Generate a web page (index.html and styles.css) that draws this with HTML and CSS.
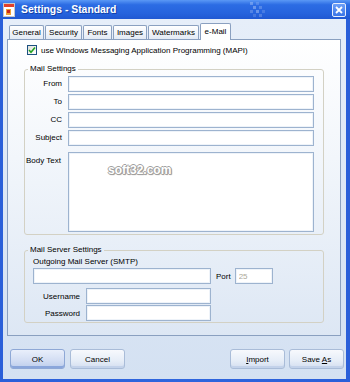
FILE: index.html
```html
<!DOCTYPE html>
<html lang="en">
<head>
  <meta charset="UTF-8">
  <title>Settings - Standard</title>
  <link rel="stylesheet" href="styles.css">
</head>
<body>

  <div class="window">

    <!-- Title bar -->
    <div class="titlebar">
      <svg class="app-icon" width="12" height="14" viewBox="0 0 12 14">
        <rect x="0.5" y="0.5" width="11" height="13" fill="#fff" stroke="#c9c9c9"/>
        <rect x="1" y="1" width="10" height="3" fill="#e2402a"/>
        <rect x="3" y="6" width="5" height="6" fill="#f0a035"/>
        <rect x="4" y="7" width="3" height="3" fill="#c8281c"/>
      </svg>
      <span class="title">Settings - Standard</span>
      <svg class="title-pattern" width="20" height="19" viewBox="0 0 20 19">
        <rect x="2" y="2" width="3" height="3" fill="#fff" opacity="0.25"/>
        <rect x="8" y="2" width="3" height="3" fill="#fff" opacity="0.15"/>
        <rect x="5" y="6" width="3" height="3" fill="#fff" opacity="0.3"/>
        <rect x="11" y="6" width="3" height="3" fill="#fff" opacity="0.2"/>
        <rect x="2" y="10" width="3" height="3" fill="#fff" opacity="0.2"/>
        <rect x="8" y="10" width="3" height="3" fill="#fff" opacity="0.3"/>
        <rect x="14" y="10" width="3" height="3" fill="#fff" opacity="0.15"/>
        <rect x="5" y="14" width="3" height="3" fill="#fff" opacity="0.15"/>
        <rect x="11" y="14" width="3" height="3" fill="#fff" opacity="0.2"/>
      </svg>
      <span class="close">
        <svg width="8" height="8" viewBox="0 0 8 8">
          <path d="M1 1 L7 7 M7 1 L1 7" stroke="#fff" stroke-width="1.8"/>
        </svg>
      </span>
    </div>

    <div class="client">

      <!-- Tabs -->
      <div class="tabs">
        <span class="tab tab-general">General</span>
        <span class="tab tab-security">Security</span>
        <span class="tab tab-fonts">Fonts</span>
        <span class="tab tab-images">Images</span>
        <span class="tab tab-watermarks">Watermarks</span>
        <span class="tab tab-email active">e-Mail</span>
      </div>

      <div class="panel">
        <label class="check-row">
          <span class="checkbox">
            <svg width="8" height="8" viewBox="0 0 8 8">
              <path d="M1 4 L3 6.2 L7 1.5" fill="none" stroke="#21a121" stroke-width="1.6"/>
            </svg>
          </span>
          use Windows Messaging Application Programming (MAPI)
        </label>

        <!-- Mail Settings -->
        <fieldset class="group">
          <legend>Mail Settings</legend>
          <div class="mail-grid">
            <label>From</label>
            <input type="text" class="field">
            <label>To</label>
            <input type="text" class="field">
            <label>CC</label>
            <input type="text" class="field">
            <label>Subject</label>
            <input type="text" class="field">
            <label class="body-label">Body Text</label>
            <div class="body-wrap">
              <textarea class="field body-text"></textarea>
              <span class="watermark">soft32.com</span>
            </div>
          </div>
        </fieldset>

        <!-- Mail Server Settings -->
        <fieldset class="group server">
          <legend>Mail Server Settings</legend>
          <div class="server-inner">
            <div class="smtp-label">Outgoing Mail Server (SMTP)</div>
            <div class="smtp-row">
              <input type="text" class="field smtp">
              <label class="port-label">Port</label>
              <input type="text" class="field port" value="25" disabled>
            </div>
            <div class="login-row first">
              <label>Username</label>
              <input type="text" class="field login">
            </div>
            <div class="login-row">
              <label>Password</label>
              <input type="password" class="field login">
            </div>
          </div>
        </fieldset>
      </div>

      <!-- Buttons -->
      <div class="buttons">
        <button class="btn default">OK</button>
        <button class="btn">Cancel</button>
        <span class="spacer"></span>
        <button class="btn"><u>I</u>mport</button>
        <button class="btn">Save <u>A</u>s</button>
      </div>

    </div>
  </div>

</body>
</html>
```

FILE: styles.css
```css
/* General Reset */
* {
  margin: 0;
  padding: 0;
  box-sizing: border-box;
}

body {
  font-family: 'Liberation Sans', Arial, sans-serif;
  font-size: 8px;
  color: #000;
  background: #fff;
}

/* Window frame */
.window {
  width: 350px;
  height: 382px;
  display: flex;
  flex-direction: column;
  background: linear-gradient(to right, #2a5fd9, #2f66de 50%, #2a5fd9);
}

/* Title bar */
.titlebar {
  height: 19px;
  display: flex;
  align-items: center;
  padding-left: 3px;
  background: linear-gradient(to bottom, #5a98f5 0%, #2c6ce4 25%, #2663dd 70%, #2058d2 100%);
}

.app-icon {
  flex: none;
}

.title {
  margin-left: 6px;
  color: #fff;
  font-weight: bold;
  font-size: 10.4px;
  text-shadow: 1px 1px 0 #1240a8;
}

.title-pattern {
  margin-left: 132px;
}

.close {
  margin-left: auto;
  margin-right: 4px;
  width: 14px;
  height: 14px;
  display: flex;
  align-items: center;
  justify-content: center;
  border: 1px solid #e8eefc;
  border-radius: 2px;
  background: linear-gradient(to bottom, #6ea0f7, #3a75e8);
}

/* Client area */
.client {
  flex: 1;
  margin: 0 4px 3px 3px;
  display: flex;
  flex-direction: column;
  background: linear-gradient(to bottom, #e6eef9, #d4e1f2);
}

/* Tabs */
.tabs {
  height: 21px;
  padding: 4px 0 0 6px;
  margin-bottom: -1px;
  display: flex;
  align-items: flex-end;
  gap: 1px;
}

.tab {
  flex: none;
  height: 14px;
  margin-bottom: 1px;
  line-height: 13px;
  text-align: center;
  border: 1px solid #8aa0c0;
  border-bottom: none;
  border-radius: 2px 2px 0 0;
  background: linear-gradient(to bottom, #ffffff, #e3eaf4);
  white-space: nowrap;
  overflow: hidden;
}

.tab-general { width: 35px; }
.tab-security { width: 37px; }
.tab-fonts { width: 29px; }
.tab-images { width: 34px; }
.tab-watermarks { width: 51px; }
.tab-email { width: 31px; }

.tab.active {
  position: relative;
  z-index: 1;
  height: 17px;
  margin-bottom: 0;
  line-height: 15px;
  background: #fff;
}

/* Tab panel */
.panel {
  width: 334px;
  height: 297px;
  margin-left: 4px;
  border: 1px solid #8aa0c0;
  background: linear-gradient(to bottom, #ffffff, #f2f6fb 40%, #dde7f4);
}

.check-row {
  display: flex;
  align-items: center;
  gap: 4px;
  height: 10px;
  margin: 5px 0 0 19px;
}

.checkbox {
  width: 10px;
  height: 10px;
  display: flex;
  align-items: center;
  justify-content: center;
  border: 1px solid #1c5180;
  background: linear-gradient(to bottom right, #e0e0da, #ffffff);
}

/* Group boxes */
.group {
  margin: 9px 16px 0 16px;
  min-width: 0;
  border: 1px solid #d3d1c4;
  border-radius: 3px;
}

.group legend {
  margin-left: 3px;
  padding: 0 2px;
  line-height: 10px;
}

.group.server {
  margin-top: 10px;
}

.field {
  height: 16px;
  border: 1px solid #9db3cf;
  box-shadow: inset 0 0 0 1px #eef3f9;
  background: #fff;
  font-family: inherit;
  font-size: 8px;
  padding: 0 3px;
  outline: none;
}

.mail-grid {
  display: grid;
  grid-template-columns: 37px 1fr;
  column-gap: 6px;
  row-gap: 2px;
  padding: 2px 9px 2px 0;
}

.mail-grid label {
  line-height: 16px;
  text-align: right;
}

.mail-grid .body-label {
  margin-top: 4px;
  padding: 1px 0 0 1px;
  text-align: left;
  white-space: nowrap;
}

.body-wrap {
  position: relative;
  margin-top: 4px;
  height: 80px;
}

.body-text {
  display: block;
  width: 100%;
  height: 80px;
  resize: none;
}

.watermark {
  position: absolute;
  left: 40px;
  top: 12px;
  font-size: 12px;
  line-height: 12px;
  font-weight: bold;
  color: #fff;
  text-shadow: 1px 0 0 #a0a0a0, -1px 0 0 #a0a0a0, 0 1px 0 #a0a0a0, 0 -1px 0 #a0a0a0, 1px 1px 1px #888;
}

/* Mail server group */
.server-inner {
  padding: 2px 0 1px 8px;
}

.smtp-label {
  line-height: 10px;
}

.smtp-row {
  display: flex;
  align-items: center;
  margin-top: 1px;
}

.smtp {
  width: 178px;
}

.port-label {
  margin: 0 4px 0 5px;
}

.port {
  width: 38px;
  color: #aca899;
}

.login-row {
  display: flex;
  align-items: center;
  gap: 6px;
  margin-top: 1px;
}

.login-row.first {
  margin-top: 4px;
}

.login-row label {
  width: 47px;
  text-align: right;
}

.login {
  width: 125px;
}

/* Buttons */
.buttons {
  display: flex;
  margin: 13px 2px 0 7px;
}

.spacer {
  flex: 1;
}

.btn {
  width: 55px;
  height: 20px;
  font-family: inherit;
  font-size: 8px;
  color: #000;
  border: 1px solid #a9bcd8;
  border-radius: 3px;
  background: linear-gradient(to bottom, #f7f9fd, #e6edf7 60%, #d3def0);
  box-shadow: inset 0 -2px 0 #c3d2ea;
}

.btn + .btn {
  margin-left: 5px;
}

.spacer + .btn {
  margin-left: 0;
}

.btn:last-child {
  margin-left: 4px;
}

.btn.default {
  border-color: #8ea8d6;
  background: linear-gradient(to bottom, #e9effb, #d2ddf3 60%, #bccdec);
  box-shadow: inset 0 -2px 0 #8aa6db;
}
```
